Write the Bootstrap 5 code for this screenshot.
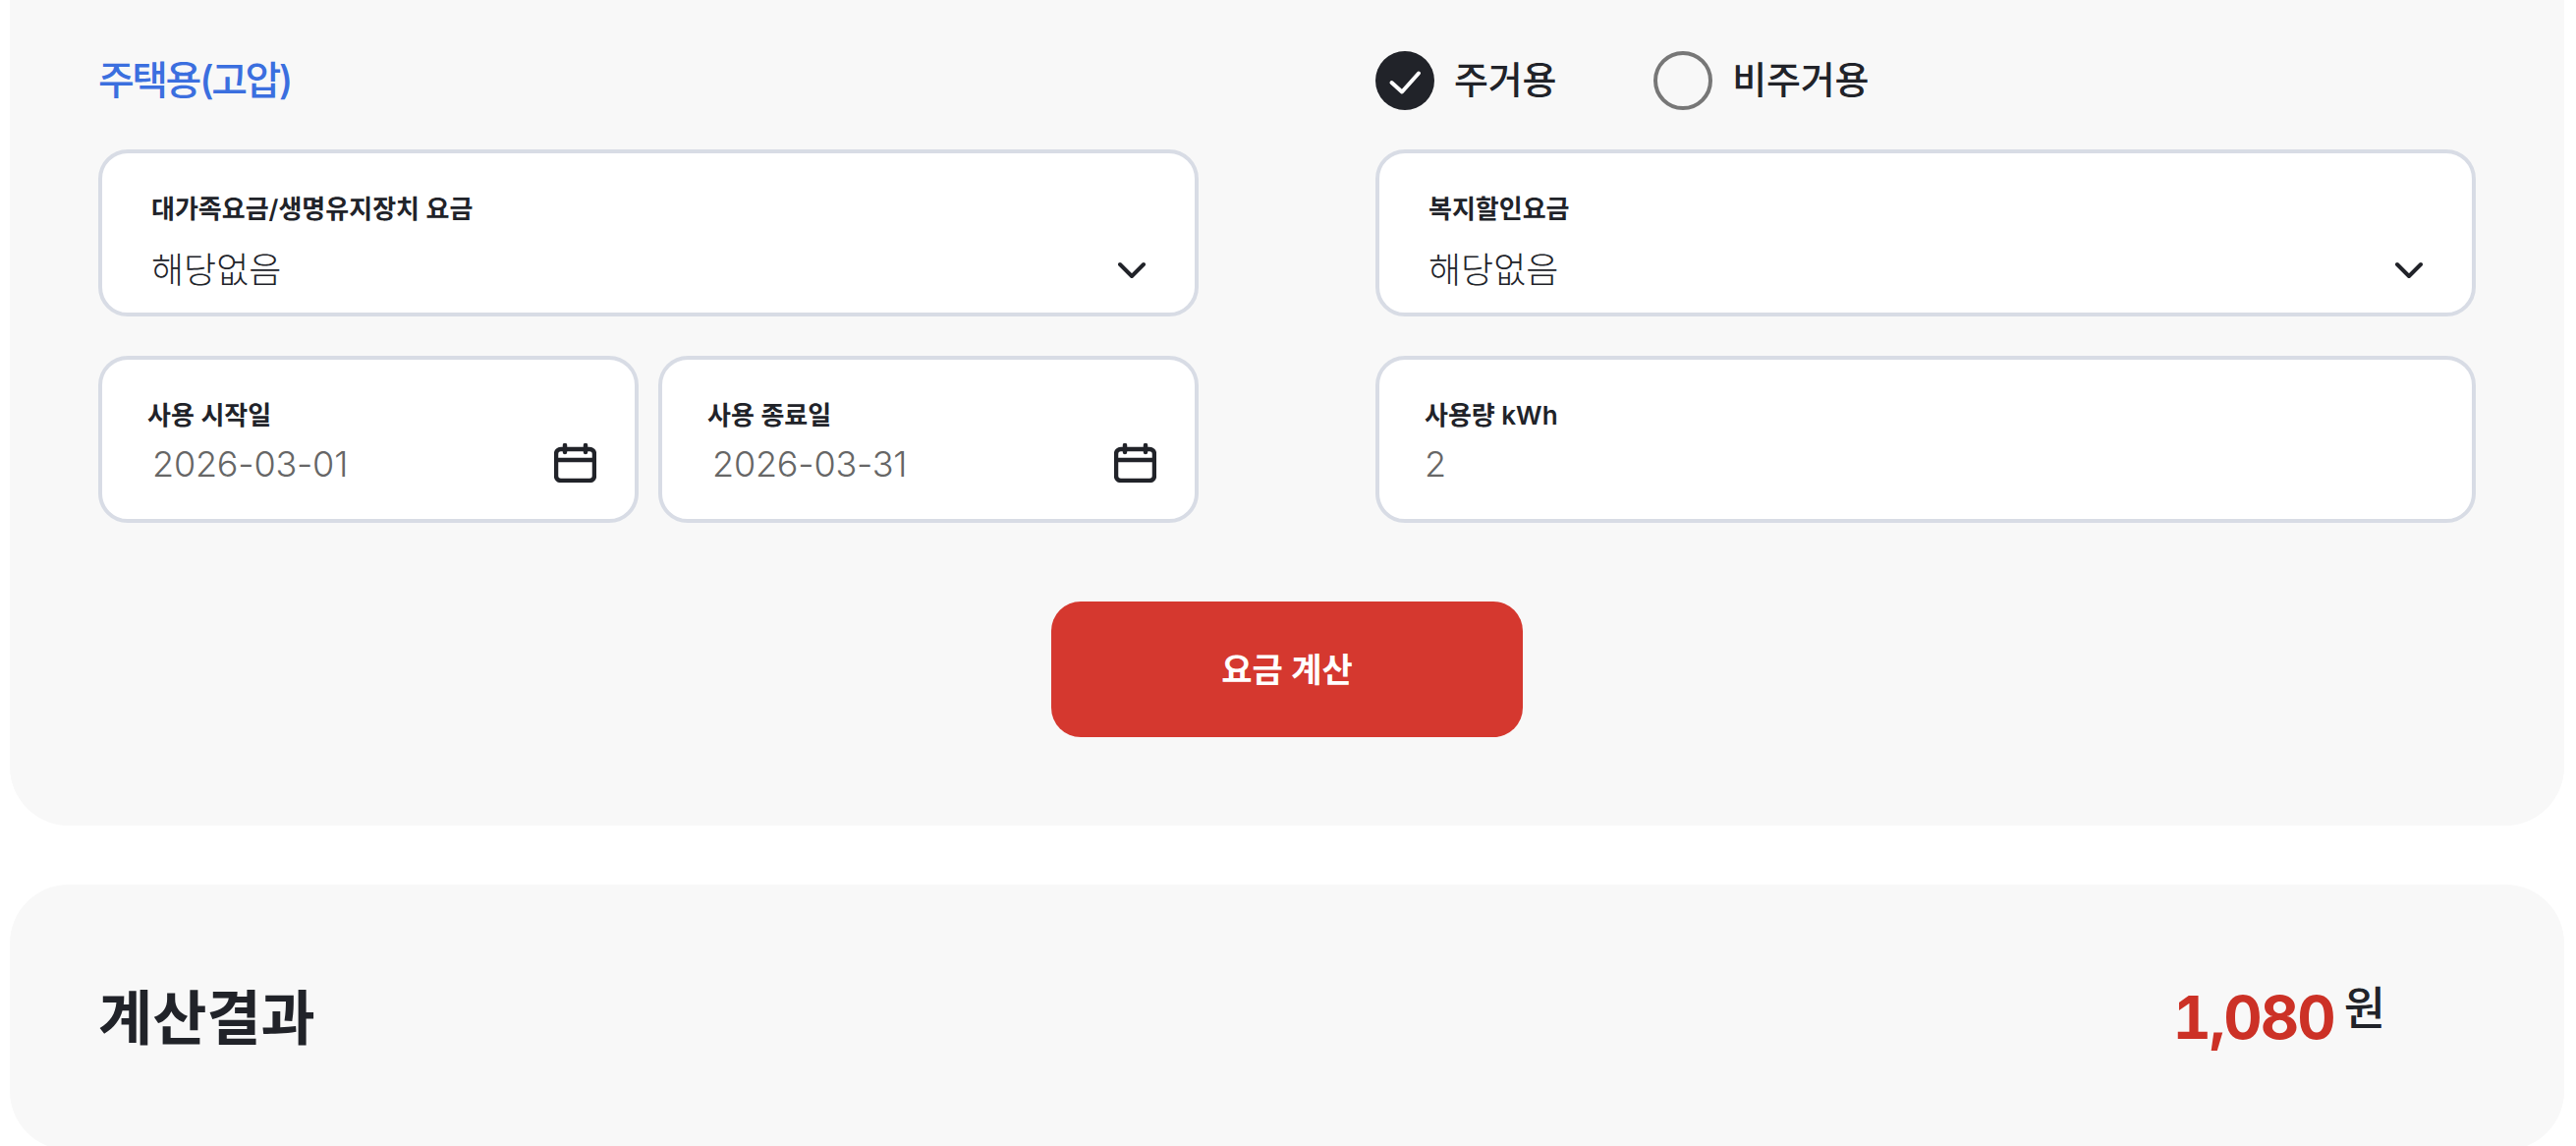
<!DOCTYPE html>
<html lang="ko">
<head>
  <meta charset="UTF-8" />
  <meta name="viewport" content="width=device-width, initial-scale=1.0" />
  <title>전기요금 계산</title>
  <link rel="stylesheet" href="https://cdn.jsdelivr.net/npm/bootstrap@5.3.0/dist/css/bootstrap.min.css">
  <style>
    html, body { height: 100%; overflow: hidden; }
    body {
      background: #fff;
      color: #212329;
      font-family: Inter, "Noto Sans CJK KR", sans-serif;
    }
    .page-wrap { width: 2600px; margin-left: 10px; }
    .calc-panel { background: #f8f8f8; padding: 52px 90px 90px; border-radius: 0 0 60px 60px; }
    .result-panel { background: #f8f8f8; height: 270px; margin-top: 60px; padding: 0 182px 0 90px; border-radius: 60px; }
    .calc-row { --bs-gutter-x: 180px; --bs-gutter-y: 0; margin-bottom: 40px; }
    .calc-row.last-row { margin-bottom: 80px; }
    .type-title { color: #3b6fdf; font-size: 40px; font-weight: 500; line-height: 60px; letter-spacing: -2.5px; }
    .radio-group { gap: 99px; height: 60px; }
    .radio-item { gap: 20px; font-size: 38px; font-weight: 500; line-height: 60px; margin-top: -2px; letter-spacing: -.2px; }
    .radio-dot { width: 60px; height: 60px; border-radius: 50%; flex: none; margin-top: 2px; }
    .radio-dot svg { display: block; }
    .radio-dot.on { background: #212329; }
    .radio-dot.off { border: 4px solid #777; }
    .date-pair { gap: 20px; }
    .date-pair .field-box { width: 550px; }
    .field-box {
      height: 170px;
      background: #fff;
      border: 4px solid #d8dce5;
      border-radius: 30px;
      padding: 38px 50px 0 50px;
    }
    .field-box.narrow { padding: 38px 39px 0 46px; }
    .field-label { font-size: 26px; font-weight: 600; line-height: 38px; display: block; margin: 0; }
    .field-value {
      font-size: 36px;
      font-weight: 300;
      line-height: 50px;
      height: 50px;
      padding: 0;
      border: 0;
      border-radius: 0;
      background: none;
      box-shadow: none;
      color: #212329;
      font-family: inherit;
    }
    .value-line { margin-top: 18px; }
    .narrow .value-line { margin-top: 5px; }
    .field-value.muted { color: #666; letter-spacing: -.2px; }
    .field-value.date-value { padding-left: 5px; }
    select.field-value { background-image: none; }
    .chevron { width: 28px; height: 18px; flex: none; }
    .calendar { width: 43px; height: 40px; flex: none; margin-top: -2px; }
    .calc-btn {
      width: 480px;
      height: 138px;
      background: #d5382f;
      border: 0;
      border-radius: 30px;
      color: #fff;
      font-size: 34px;
      font-weight: 600;
    }
    .result-title { font-size: 60px; font-weight: 700; margin: 2px 0 0; }
    .result-num { color: #cc3126; font-size: 61px; font-weight: 700; line-height: 1; letter-spacing: -2px; font-variant-numeric: tabular-nums; }
    .result-unit { font-size: 46px; font-weight: 500; line-height: 1; margin: -3px 0 0 10px; }
  </style>
</head>
<body>
  <div class="page-wrap">
    <form class="calc-panel">
      <div class="row calc-row">
        <div class="col-6"><div class="type-title">주택용(고압)</div></div>
        <div class="col-6">
          <div class="d-flex radio-group">
            <div class="d-flex align-items-center radio-item">
              <span class="radio-dot on">
                <svg width="60" height="60" viewBox="0 0 60 60" fill="none"><path d="M16.500 32L27 41.500L44 22.500" stroke="#fff" stroke-width="4" stroke-linecap="round" stroke-linejoin="round"/></svg>
              </span>
              주거용
            </div>
            <div class="d-flex align-items-center radio-item">
              <span class="radio-dot off"></span>
              비주거용
            </div>
          </div>
        </div>
      </div>

      <div class="row calc-row">
        <div class="col-6">
          <div class="field-box">
            <label class="field-label">대가족요금/생명유지장치 요금</label>
            <div class="d-flex align-items-center justify-content-between value-line">
              <select class="form-select field-value"><option>해당없음</option></select>
              <svg class="chevron" viewBox="0 0 28 18" fill="none"><path d="M2 3L14 15L26 3" stroke="#212329" stroke-width="4" stroke-linecap="round" stroke-linejoin="round"/></svg>
            </div>
          </div>
        </div>
        <div class="col-6">
          <div class="field-box">
            <label class="field-label">복지할인요금</label>
            <div class="d-flex align-items-center justify-content-between value-line">
              <select class="form-select field-value"><option>해당없음</option></select>
              <svg class="chevron" viewBox="0 0 28 18" fill="none"><path d="M2 3L14 15L26 3" stroke="#212329" stroke-width="4" stroke-linecap="round" stroke-linejoin="round"/></svg>
            </div>
          </div>
        </div>
      </div>

      <div class="row calc-row last-row">
        <div class="col-6">
          <div class="d-flex date-pair">
            <div class="field-box narrow">
              <label class="field-label">사용 시작일</label>
              <div class="d-flex align-items-center justify-content-between value-line">
                <input class="form-control field-value muted date-value" value="2026-03-01">
                <svg class="calendar" viewBox="0 0 43 40" fill="none"><rect x="2" y="6" width="39" height="32" rx="5" stroke="#212329" stroke-width="4.500"/><path d="M2 17H41M11 2V9M32 2V9" stroke="#212329" stroke-width="4.500" stroke-linecap="round"/></svg>
              </div>
            </div>
            <div class="field-box narrow">
              <label class="field-label">사용 종료일</label>
              <div class="d-flex align-items-center justify-content-between value-line">
                <input class="form-control field-value muted date-value" value="2026-03-31">
                <svg class="calendar" viewBox="0 0 43 40" fill="none"><rect x="2" y="6" width="39" height="32" rx="5" stroke="#212329" stroke-width="4.500"/><path d="M2 17H41M11 2V9M32 2V9" stroke="#212329" stroke-width="4.500" stroke-linecap="round"/></svg>
              </div>
            </div>
          </div>
        </div>
        <div class="col-6">
          <div class="field-box narrow">
            <label class="field-label">사용량 kWh</label>
            <div class="value-line">
              <input class="form-control field-value muted" value="2">
            </div>
          </div>
        </div>
      </div>

      <div class="d-flex justify-content-center">
        <button type="button" class="btn calc-btn">요금 계산</button>
      </div>
    </form>

    <div class="result-panel d-flex align-items-center justify-content-between">
      <h2 class="result-title">계산결과</h2>
      <div class="d-flex align-items-start result-amount">
        <span class="result-num">1,080</span>
        <span class="result-unit">원</span>
      </div>
    </div>
  </div>
  <script src="https://cdn.jsdelivr.net/npm/bootstrap@5.3.0/dist/js/bootstrap.bundle.min.js"></script>
</body>
</html>
